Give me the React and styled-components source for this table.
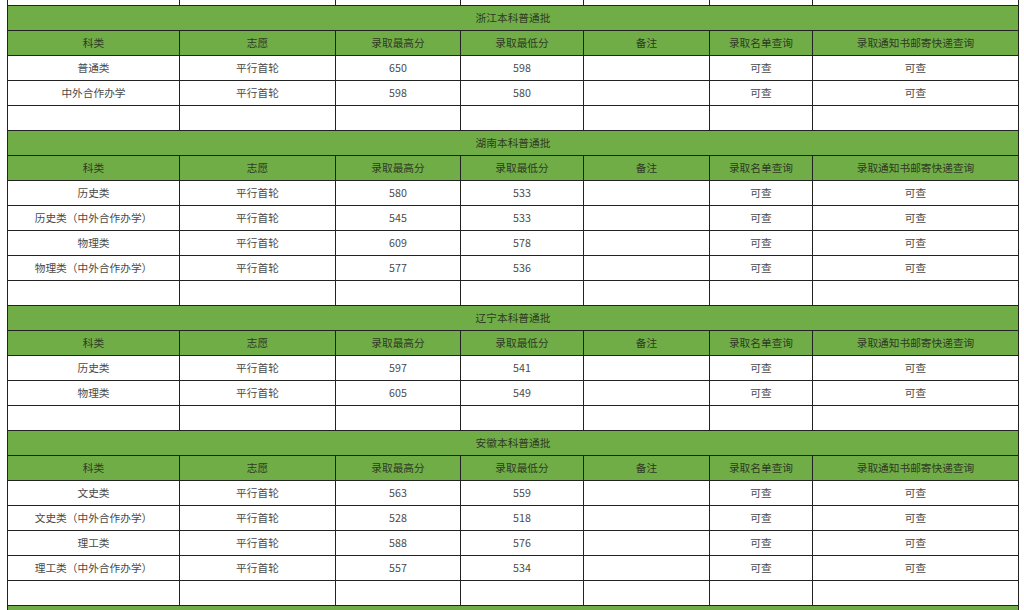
import React from 'react'
import styled, { createGlobalStyle } from 'styled-components'

const GlobalStyle = createGlobalStyle`
    body {
        margin: 0;
        background: #ffffff;
        font-family: "Noto Sans CJK SC", "Noto Sans", sans-serif;
        overflow: hidden;
    }
`

const Page = styled.div`
    padding-left: 7px;
    height: 610px;
    overflow: hidden;
`

const Table = styled.table`
    border-collapse: collapse;
    table-layout: fixed;
    width: 1011px;
    margin-top: -20px;
    font-size: 10.7px;
    color: #333;
`

const Row = styled.tr`
    height: 25px;
`

const Cell = styled.td`
    border: 1px solid #222;
    padding: 0;
    text-align: center;
    vertical-align: middle;
    line-height: 16px;
    background: ${props => (props.$green ? '#70ad47' : '#ffffff')};
    color: ${props => (props.$green ? '#2f3a24' : '#4a4a4a')};
`

const widths = [172, 156, 125, 123, 126, 103, 206]
const heads = ['科类', '志愿', '录取最高分', '录取最低分', '备注', '录取名单查询', '录取通知书邮寄快递查询']

const sections = [
    {
        title: '浙江本科普通批',
        rows: [
            ['普通类', '650', '598'],
            ['中外合作办学', '598', '580'],
        ],
    },
    {
        title: '湖南本科普通批',
        rows: [
            ['历史类', '580', '533'],
            ['历史类（中外合作办学）', '545', '533'],
            ['物理类', '609', '578'],
            ['物理类（中外合作办学）', '577', '536'],
        ],
    },
    {
        title: '辽宁本科普通批',
        rows: [
            ['历史类', '597', '541'],
            ['物理类', '605', '549'],
        ],
    },
    {
        title: '安徽本科普通批',
        rows: [
            ['文史类', '563', '559'],
            ['文史类（中外合作办学）', '528', '518'],
            ['理工类', '588', '576'],
            ['理工类（中外合作办学）', '557', '534'],
        ],
    },
]

const EmptyRow = () => (
    <Row>
        {widths.map((w, i) => <Cell key={i} />)}
    </Row>
)

const App = () => {
    return (
        <Page>
            <GlobalStyle />
            <Table>
                <colgroup>
                    {widths.map((w, i) => <col key={i} style={{ width: w }} />)}
                </colgroup>
                <tbody>
                    <EmptyRow />
                    {sections.map(sec => (
                        <React.Fragment key={sec.title}>
                            <Row>
                                <Cell $green colSpan={7}>{sec.title}</Cell>
                            </Row>
                            <Row>
                                {heads.map(h => <Cell $green key={h}>{h}</Cell>)}
                            </Row>
                            {sec.rows.map(r => (
                                <Row key={r[0]}>
                                    <Cell>{r[0]}</Cell>
                                    <Cell>平行首轮</Cell>
                                    <Cell>{r[1]}</Cell>
                                    <Cell>{r[2]}</Cell>
                                    <Cell></Cell>
                                    <Cell>可查</Cell>
                                    <Cell>可查</Cell>
                                </Row>
                            ))}
                            <EmptyRow />
                        </React.Fragment>
                    ))}
                    <Row>
                        <Cell $green colSpan={7}></Cell>
                    </Row>
                </tbody>
            </Table>
        </Page>
    )
}

export default App
